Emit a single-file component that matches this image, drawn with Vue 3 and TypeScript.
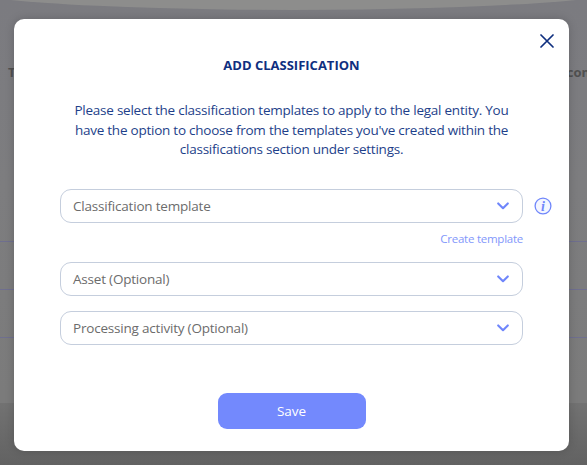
<script setup lang="ts">
interface Field { label: string; hint?: boolean }
const fields: Field[] = [
  { label: 'Classification template', hint: true },
  { label: 'Asset (Optional)' },
  { label: 'Processing activity (Optional)' },
]
</script>

<template>
  <div class="page">
    <div class="top-curve"></div>
    <div class="heading-row"><span>T</span><span>con</span></div>
    <div class="row"></div>
    <div class="row"></div>
    <div class="row last"></div>
    <div class="band"></div>
    <div class="dialog-layer">
      <section class="dialog">
        <button class="close" aria-label="Close">
          <svg width="14" height="14" viewBox="0 0 14 14"><path d="M1 1 13 13M13 1 1 13" stroke="#0f2f7f" stroke-width="1.7" fill="none" stroke-linecap="round"/></svg>
        </button>
        <h2 class="title">ADD CLASSIFICATION</h2>
        <p class="intro">Please select the classification templates to apply to the legal entity. You have the option to choose from the templates you've created within the classifications section under settings.</p>
        <div class="fields">
          <div v-for="f in fields" :key="f.label" class="field-block">
            <div class="field-line">
              <div class="select">
                <span>{{ f.label }}</span>
                <svg class="chev" width="12" height="8" viewBox="0 0 12 8"><path d="M1.2 1.4 6 6.2l4.8-4.8" stroke="#6f86fb" stroke-width="2.1" fill="none" stroke-linecap="round" stroke-linejoin="round"/></svg>
              </div>
              <svg v-if="f.hint" class="info" width="18" height="18" viewBox="0 0 18 18"><circle cx="9" cy="9" r="7.9" stroke="#6f86fb" stroke-width="1.3" fill="#f4f6ff"/><text x="9" y="13.6" text-anchor="middle" class="info-i">i</text></svg>
            </div>
            <a v-if="f.hint" class="create">Create template</a>
          </div>
        </div>
        <button class="save">Save</button>
      </section>
    </div>
  </div>
</template>

<style>
html, body { margin: 0; }
</style>

<style scoped>
.page {
  position: relative;
  width: 587px;
  height: 465px;
  overflow: hidden;
  background: linear-gradient(180deg, #7b7b80 0%, #7d7d7f 40%, #7b7b7b 85%);
  font-family: "Open Sans", sans-serif;
  box-sizing: border-box;
  padding-top: 64px;
}
.top-curve {
  position: absolute;
  left: -60px;
  right: -60px;
  top: -40px;
  height: 50px;
  background: #8d8d8c;
  border-radius: 0 0 50% 50%;
}
.heading-row {
  display: flex;
  justify-content: space-between;
  height: 177px;
  padding: 0 0 0 8px;
  font-size: 13px;
  font-weight: 700;
  line-height: 16px;
  color: #505050;
  margin-right: -3px;
}
.row {
  height: 47px;
  border-top: 1px solid #6f6f8f;
}
.row.last { height: 65px; }
.band {
  height: 62px;
  background: linear-gradient(180deg, #727272, #626262);
}
.dialog-layer {
  position: absolute;
  inset: 0;
  display: flex;
  align-items: flex-start;
  justify-content: flex-start;
  padding: 19px 0 0 14px;
}
.dialog {
  position: relative;
  width: 555px;
  height: 432px;
  box-sizing: border-box;
  background: #fff;
  border-radius: 10px;
  box-shadow: 0 0 10px rgba(0, 0, 0, 0.18);
  padding: 37px 46px 0;
  display: flex;
  flex-direction: column;
  align-items: center;
}
.close {
  position: absolute;
  top: 15px;
  right: 15px;
  padding: 0;
  border: 0;
  background: none;
  display: flex;
}
.title {
  margin: 0;
  font-size: 13px;
  line-height: 18px;
  font-weight: 700;
  color: #0f2f7f;
}
.intro {
  margin: 27px 0 0;
  width: 440px;
  font-size: 13.5px;
  letter-spacing: -0.24px;
  line-height: 19.5px;
  text-align: center;
  color: #1e3f8a;
}
.fields {
  width: 100%;
  margin-top: 29px;
  display: flex;
  flex-direction: column;
  gap: 15px;
}
.field-block { display: flex; flex-direction: column; }
.field-line { position: relative; }
.select {
  height: 34px;
  box-sizing: border-box;
  border: 1px solid #c5cedd;
  border-radius: 11px;
  padding: 1px 13px 0 12px;
  display: flex;
  align-items: center;
  justify-content: space-between;
  font-size: 13.5px;
  letter-spacing: -0.2px;
  color: #6c6c6c;
}
.info {
  position: absolute;
  top: 8px;
  right: -29px;
}
.info-i {
  font-family: "Liberation Serif", serif;
  font-size: 14px;
  font-style: italic;
  font-weight: 700;
  fill: #6f86fb;
}
.create {
  align-self: flex-end;
  margin-top: 7px;
  font-size: 11.5px;
  letter-spacing: -0.25px;
  line-height: 17px;
  color: #8398fb;
}
.save {
  margin-top: 48px;
  width: 148px;
  height: 36px;
  border: 0;
  border-radius: 9px;
  background: #7389fd;
  color: #fff;
  font-family: inherit;
  font-size: 13.5px;
}
</style>
